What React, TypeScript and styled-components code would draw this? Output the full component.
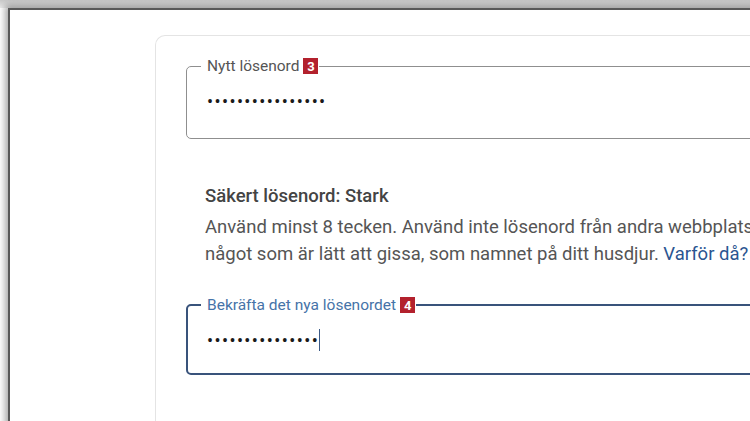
import React from "react";
import styled, { createGlobalStyle } from "styled-components";

const GlobalStyle = createGlobalStyle`
  html, body { margin: 0; padding: 0; background: #ffffff; }
  body { font-family: Roboto, "Noto Sans", "Liberation Sans", sans-serif; overflow: hidden; }
  * { box-sizing: border-box; }
`;

const Page = styled.div`
  width: 750px;
  height: 421px;
  overflow: hidden;
  padding: 8px 0 0 8px;
  background: linear-gradient(180deg, #c9c9c9 0px, #ececec 8px, #ffffff 8px);
`;

const Frame = styled.div`
  width: 760px;
  height: 430px;
  background: #ffffff;
  border-top: 2px solid #585858;
  border-left: 2px solid #585858;
  box-shadow: -2px -2px 7px 1px rgba(0, 0, 0, 0.35);
  padding: 25px 0 0 145px;
`;

const Card = styled.div`
  width: 700px;
  height: 420px;
  border: 1px solid #e4e4e4;
  border-right: none;
  border-bottom: none;
  border-radius: 10px 0 0 0;
  padding: 22px 0 0 30px;
  display: flex;
  flex-direction: column;
`;

const Field = styled.fieldset<{ $active?: boolean }>`
  margin: 0;
  width: 620px;
  min-width: 0;
  padding: 0 0 ${(p) => (p.$active ? "23px" : "27px")} ${(p) => (p.$active ? "13px" : "14px")};
  border: ${(p) => (p.$active ? "2px solid #39537b" : "1px solid #8f8f8f")};
  border-radius: 5px;
`;

const Legend = styled.legend<{ $active?: boolean }>`
  padding: 0 1px 0 6px;
  display: flex;
  align-items: center;
  gap: 4px;
  height: 16px;
  font-size: 15.5px;
  line-height: 16px;
  color: ${(p) => (p.$active ? "#4673a8" : "#555555")};
`;

const Badge = styled.span`
  display: inline-flex;
  align-items: center;
  justify-content: center;
  width: 15px;
  height: 16px;
  background: #b3212d;
  color: #ffffff;
  font-size: 13px;
  font-weight: 700;
  line-height: 1;
`;

const Value = styled.div`
  margin-top: 17px;
  padding-left: 6px;
  height: 20px;
  display: flex;
  align-items: center;
  font-size: 18px;
  color: #1a1a1a;
  letter-spacing: 1.4px;
`;

const Caret = styled.span`
  display: inline-block;
  width: 1px;
  height: 22px;
  background: #3b5a86;
`;

const Info = styled.div`
  margin: 45px 0 0 19px;
  color: #4a4a4a;
`;

const Title = styled.div`
  font-size: 18.5px;
  font-weight: 500;
  line-height: 24px;
  color: #444444;
`;

const Body = styled.p`
  margin: 6px 0 29px;
  font-size: 18.5px;
  line-height: 27px;
  white-space: nowrap;
  color: #555555;
`;

const Link = styled.a`
  color: #2b5591;
  text-decoration: none;
`;

export default function App() {
  return (
    <>
      <GlobalStyle />
      <Page>
        <Frame>
          <Card>
            <Field>
              <Legend>
                Nytt lösenord <Badge>3</Badge>
              </Legend>
              <Value>••••••••••••••••</Value>
            </Field>
            <Info>
              <Title>Säkert lösenord: Stark</Title>
              <Body>
                Använd minst 8 tecken. Använd inte lösenord från andra webbplats
                <br />
                något som är lätt att gissa, som namnet på ditt husdjur. <Link href="#">Varför då?</Link>
              </Body>
            </Info>
            <Field $active>
              <Legend $active>
                Bekräfta det nya lösenordet <Badge>4</Badge>
              </Legend>
              <Value>
                •••••••••••••••
                <Caret />
              </Value>
            </Field>
          </Card>
        </Frame>
      </Page>
    </>
  );
}
